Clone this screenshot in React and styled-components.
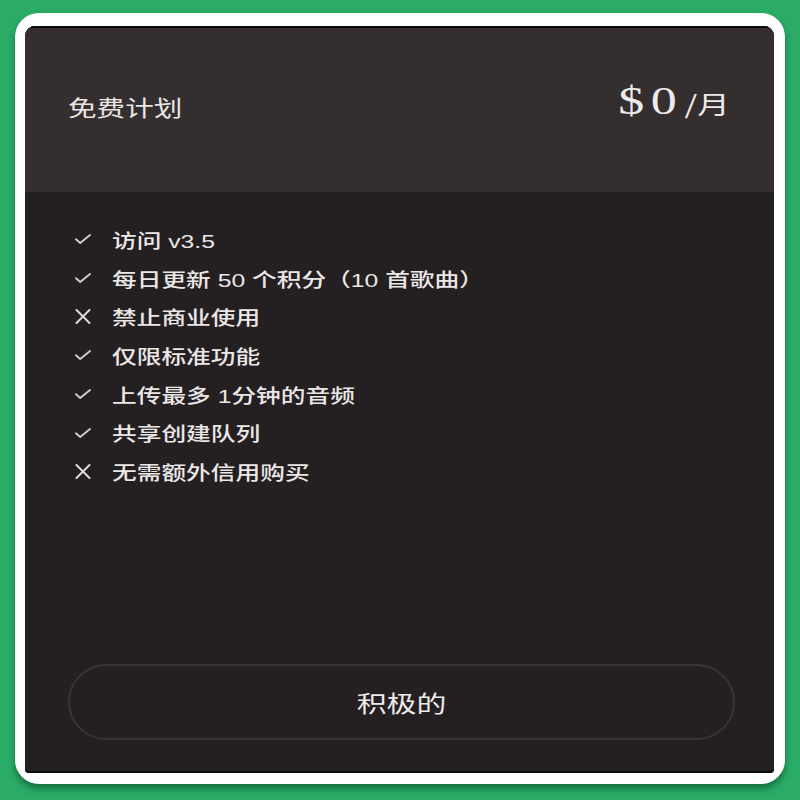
import React from "react";
import styled, { createGlobalStyle } from "styled-components";

const Global = createGlobalStyle`
  html, body { margin: 0; padding: 0; }
  body { background: #2aab66; font-family: "Liberation Sans", "Noto Sans CJK SC", sans-serif; }
  * { box-sizing: border-box; }
`;

const Page = styled.div`
  width: 800px;
  height: 800px;
  background: #2aab66;
  padding: 13px 15px 16px 15px;
`;

const Panel = styled.div`
  height: 100%;
  background: #ffffff;
  border-radius: 24px;
  padding: 13px 11px 11px 10px;
  box-shadow: 0 5px 6px rgba(10, 70, 35, 0.55);
`;

const Card = styled.div`
  height: 100%;
  background: #241f20;
  border-radius: 10px 10px 4px 4px;
  overflow: hidden;
  display: flex;
  flex-direction: column;
  box-shadow: inset 0 2px 0 #0d0b0b, inset 0 -2px 0 #0d0b0b;
`;

const Header = styled.div`
  height: 166px;
  flex: none;
  background: #342e2f;
  display: flex;
  align-items: center;
  justify-content: space-between;
  padding: 0 44px 6px 43px;
  box-shadow: inset 0 2px 0 #0d0b0b;
`;

const Stretch = styled.span`
  display: inline-block;
  white-space: nowrap;
  transform: scaleX(1.3);
  transform-origin: ${(p) => p.$origin || "left"} center;
`;

const Title = styled.div`
  font-family: "Noto Sans CJK SC", sans-serif;
  font-size: 22px;
  color: #e9e5e5;
  width: 120px;
`;

const Price = styled.div`
  display: flex;
  align-items: baseline;
  color: #eeeaea;
  font-family: "Liberation Serif", "Noto Sans CJK SC", serif;
  margin-top: -12px;
`;

const Amount = styled.span`
  font-size: 40px;
  letter-spacing: 5px;
`;

const Per = styled.span`
  font-size: 25px;
  font-family: "Noto Sans CJK SC", sans-serif;
  margin-left: 1px;
`;

const List = styled.ul`
  list-style: none;
  margin: 0;
  padding: 28px 0 0 50px;
`;

const Row = styled.li`
  height: 38.7px;
  display: flex;
  align-items: center;
  color: #ebe7e7;
  font-size: 19px;
  font-weight: 500;
`;

const IconBox = styled.span`
  width: 37px;
  flex: none;
  display: flex;
  align-items: center;
`;

const Button = styled.button`
  margin: auto 39px 33px 43px;
  height: 76px;
  border: 2px solid #383334;
  border-radius: 40px;
  background: transparent;
  color: #eeeaea;
  font-family: "Noto Sans CJK SC", sans-serif;
  font-size: 23px;
  display: flex;
  align-items: center;
  justify-content: center;
`;

const Check = () => (
  <svg width="16" height="10" viewBox="0 0 16 10">
    <path d="M1 5.2 L5.2 9 L15 1" fill="none" stroke="#d2cdcd" strokeWidth="1.9" strokeLinecap="round" strokeLinejoin="round" />
  </svg>
);

const Cross = () => (
  <svg width="16" height="15" viewBox="0 0 16 15">
    <path d="M1.5 1 L14.5 14 M14.5 1 L1.5 14" fill="none" stroke="#e0dbdb" strokeWidth="2" strokeLinecap="round" />
  </svg>
);

const features = [
  { ok: true, text: "访问 v3.5" },
  { ok: true, text: "每日更新 50 个积分（10 首歌曲）" },
  { ok: false, text: "禁止商业使用" },
  { ok: true, text: "仅限标准功能" },
  { ok: true, text: "上传最多 1分钟的音频" },
  { ok: true, text: "共享创建队列" },
  { ok: false, text: "无需额外信用购买" },
];

export default function App() {
  return (
    <>
      <Global />
      <Page>
        <Panel>
          <Card>
            <Header>
              <Title>
                <Stretch>免费计划</Stretch>
              </Title>
              <Price>
                <Stretch $origin="right">
                  <Amount>$0</Amount>
                  <Per>/月</Per>
                </Stretch>
              </Price>
            </Header>
            <List>
              {features.map((f) => (
                <Row key={f.text}>
                  <IconBox>{f.ok ? <Check /> : <Cross />}</IconBox>
                  <Stretch>{f.text}</Stretch>
                </Row>
              ))}
            </List>
            <Button>
              <Stretch $origin="center">积极的</Stretch>
            </Button>
          </Card>
        </Panel>
      </Page>
    </>
  );
}
